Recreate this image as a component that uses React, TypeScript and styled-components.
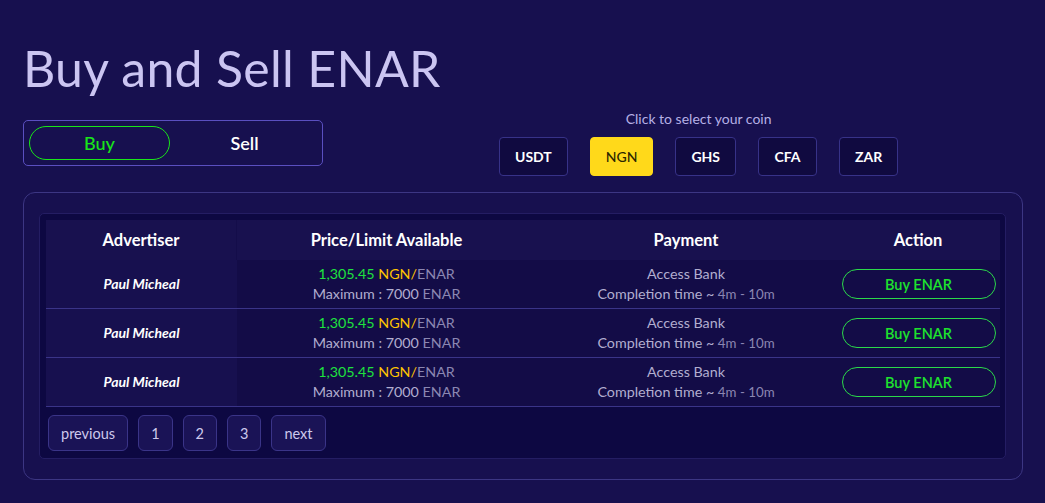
import React from "react";
import styled, { createGlobalStyle } from "styled-components";

const Global = createGlobalStyle`
  html, body { margin: 0; padding: 0; background: #17104f; }
  body { font-family: "Lato", "Noto Sans", sans-serif; }
  * { box-sizing: border-box; }
`;

const Page = styled.div`
  padding: 30px 23px 23px 23px;
  min-height: 503px;
  background: #17104f;
`;

const Title = styled.h1`
  margin: 0;
  font-size: 50px;
  line-height: 76px;
  font-weight: 400;
  color: #cbc5f2;
  letter-spacing: 0.3px;
`;

const Controls = styled.div`
  display: flex;
  align-items: flex-start;
  margin-top: 4px;
`;

const Toggle = styled.div`
  width: 300px;
  height: 46px;
  margin-top: 10px;
  border: 1px solid #5a4fc0;
  border-radius: 5px;
  padding: 5px;
  display: flex;
`;

const ToggleBtn = styled.button<{ $active?: boolean }>`
  width: 141px;
  height: 34px;
  border-radius: 17px;
  border: 1.5px solid ${(p) => (p.$active ? "#19e619" : "transparent")};
  background: transparent;
  color: ${(p) => (p.$active ? "#19e619" : "#ffffff")};
  font-family: inherit;
  font-size: 18px;
  font-weight: ${(p) => (p.$active ? 500 : 600)};
  margin-right: ${(p) => (p.$active ? "4px" : "0")};
  padding: 0;
`;

const CoinArea = styled.div`
  margin-left: 176px;
  display: flex;
  flex-direction: column;
  align-items: center;
`;

const CoinLabel = styled.div`
  color: #b6b0e6;
  font-size: 14px;
  line-height: 18px;
  margin-bottom: 9px;
`;

const CoinRow = styled.div`
  display: flex;
  gap: 22px;
`;

const Coin = styled.button<{ $active?: boolean }>`
  height: 39px;
  padding: 0 15px;
  min-width: 59px;
  border-radius: 4px;
  border: 1px solid ${(p) => (p.$active ? "#ffd91a" : "#373288")};
  background: ${(p) => (p.$active ? "#ffd91a" : "#100a40")};
  color: ${(p) => (p.$active ? "#2b2600" : "#ffffff")};
  font-family: inherit;
  font-size: 14px;
  font-weight: ${(p) => (p.$active ? 500 : 700)};
`;

const Panel = styled.div`
  margin-top: 16px;
  width: 1000px;
  border: 1px solid #3c3683;
  border-radius: 12px;
  padding: 20px 16px 20px 15px;
`;

const Inner = styled.div`
  background: #0d0842;
  border: 1px solid #241d63;
  border-radius: 5px;
  padding: 6px 5px 7px 6px;
`;

const Table = styled.div`
  width: 954px;
`;

const Row = styled.div<{ $head?: boolean }>`
  display: grid;
  grid-template-columns: 191px 299px 300px 164px;
  height: ${(p) => (p.$head ? "40px" : "49px")};
  border-bottom: ${(p) => (p.$head ? "none" : "1px solid #3a3488")};
  background: ${(p) => (p.$head ? "#18114f" : "#130c47")};
`;

const HeadCell = styled.div<{ $first?: boolean }>`
  display: flex;
  align-items: center;
  justify-content: center;
  color: #ffffff;
  font-weight: 700;
  font-size: 16.5px;
  border-right: ${(p) => (p.$first ? "1px solid #140d4a" : "none")};
`;

const Cell = styled.div<{ $first?: boolean }>`
  display: flex;
  flex-direction: column;
  align-items: center;
  justify-content: center;
  background: ${(p) => (p.$first ? "#17104f" : "transparent")};
  font-size: 14.3px;
  line-height: 20px;
  color: #b2aed0;
`;

const Name = styled.span`
  color: #ffffff;
  font-style: italic;
  font-weight: 700;
  font-size: 14px;
`;

const Green = styled.span`
  color: #1ee23e;
`;
const Yellow = styled.span`
  color: #ffc400;
`;
const Dim = styled.span<{ $small?: boolean }>`
  color: #8b87b2;
  font-size: ${(p) => (p.$small ? "13.3px" : "14.3px")};
`;

const BuyBtn = styled.button`
  width: 154px;
  height: 30px;
  border: 1px solid #2bd94a;
  border-radius: 15px;
  background: transparent;
  color: #1ee22e;
  font-family: inherit;
  font-size: 14.5px;
  font-weight: 600;
  margin-left: 1px;
`;

const Pager = styled.div`
  display: flex;
  gap: 10px;
  margin: 8px 0 0 2px;
`;

const PageBtn = styled.button`
  height: 36px;
  min-width: 34px;
  padding: 0 12px;
  border: 1px solid #3a3488;
  border-radius: 6px;
  background: #1a1356;
  color: #cdc9ec;
  font-family: inherit;
  font-size: 14.5px;
`;

const coins = ["USDT", "NGN", "GHS", "CFA", "ZAR"];

export default function App() {
  return (
    <>
      <Global />
      <Page>
        <Title>Buy and Sell ENAR</Title>
        <Controls>
          <Toggle>
            <ToggleBtn $active>Buy</ToggleBtn>
            <ToggleBtn>Sell</ToggleBtn>
          </Toggle>
          <CoinArea>
            <CoinLabel>Click to select your coin</CoinLabel>
            <CoinRow>
              {coins.map((c) => (
                <Coin key={c} $active={c === "NGN"}>
                  {c}
                </Coin>
              ))}
            </CoinRow>
          </CoinArea>
        </Controls>
        <Panel>
          <Inner>
            <Table>
              <Row $head>
                <HeadCell $first>Advertiser</HeadCell>
                <HeadCell>Price/Limit Available</HeadCell>
                <HeadCell>Payment</HeadCell>
                <HeadCell>Action</HeadCell>
              </Row>
              {[0, 1, 2].map((i) => (
                <Row key={i}>
                  <Cell $first>
                    <Name>Paul Micheal</Name>
                  </Cell>
                  <Cell>
                    <div>
                      <Green>1,305.45 </Green>
                      <Yellow>NGN/</Yellow>
                      <Dim>ENAR</Dim>
                    </div>
                    <div>
                      Maximum : 7000 <Dim>ENAR</Dim>
                    </div>
                  </Cell>
                  <Cell>
                    <div>Access Bank</div>
                    <div>
                      Completion time ~ <Dim $small>4m - 10m</Dim>
                    </div>
                  </Cell>
                  <Cell>
                    <BuyBtn>Buy ENAR</BuyBtn>
                  </Cell>
                </Row>
              ))}
            </Table>
            <Pager>
              <PageBtn>previous</PageBtn>
              <PageBtn>1</PageBtn>
              <PageBtn>2</PageBtn>
              <PageBtn>3</PageBtn>
              <PageBtn>next</PageBtn>
            </Pager>
          </Inner>
        </Panel>
      </Page>
    </>
  );
}
